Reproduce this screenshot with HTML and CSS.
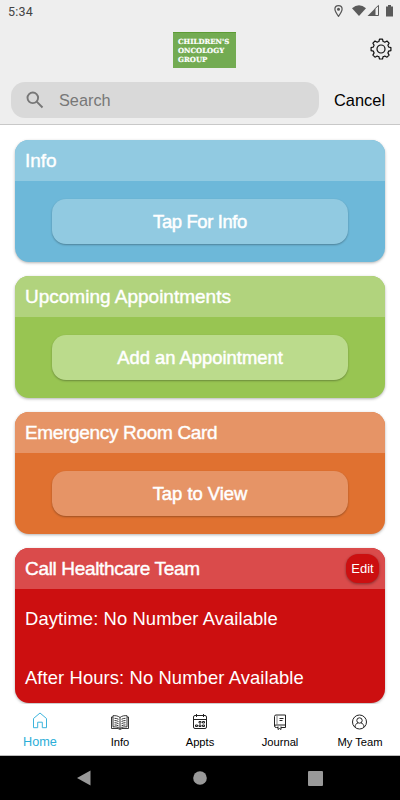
FILE: index.html
```html
<!DOCTYPE html>
<html lang="en">
<head>
    <meta charset="UTF-8">
    <meta name="viewport" content="width=device-width, initial-scale=1.0">
    <title>Children's Oncology Group</title>
    <link rel="stylesheet" href="styles.css">
</head>
<body>

    <header>
        <div class="status-bar">
            <span class="time">5:34</span>
            <svg width="64" height="16" viewBox="0 0 64 16">
                <path d="M6.500 4.600C4.400 4.600 2.900 6.200 2.900 8.100c0 2.500 3.600 7.200 3.600 7.200s3.600-4.700 3.600-7.200C10.100 6.200 8.600 4.600 6.500 4.600z" fill="none" stroke="#555" stroke-width="1.200"/>
                <circle cx="6.500" cy="8.300" r="1.500" fill="#555"/>
                <path d="M20 7.300Q27 1.300 34 7.300L27 15z" fill="#5a5a5a"/>
                <path d="M43 7.600v7.400h-7.500z" fill="#5a5a5a"/>
                <path d="M43 7.700l3.500-3.300v10.100H43z" fill="none" stroke="#5a5a5a"/>
                <path d="M54 5.500h2V4h3v1.500h2V15.500h-7z" fill="#5a5a5a"/>
            </svg>
        </div>
        <div class="title-bar">
            <div class="logo">CHILDREN'S<br>ONCOLOGY<br>GROUP</div>
            <svg class="gear" width="22" height="22" viewBox="0 0 22 22" fill="none" stroke="#111" stroke-width="1.200" stroke-linejoin="round">
                <path d="M9.500 1.200h3l.6 2.300q.9.200 1.700.7l2.200-1.200 2.100 2.100-1.200 2.200q.5.800.7 1.700l2.300.6v3l-2.300.6q-.2.900-.7 1.700l1.200 2.200-2.100 2.100-2.200-1.200q-.8.500-1.700.7l-.6 2.300h-3l-.6-2.300q-.9-.2-1.700-.7L5 19.200l-2.100-2.100 1.200-2.200q-.5-.8-.7-1.700l-2.300-.6v-3l2.300-.6q.2-.9.700-1.700L2.900 5.100 5 3l2.200 1.200q.8-.5 1.700-.7z"/>
                <circle cx="11" cy="11" r="4"/>
            </svg>
        </div>
        <div class="search-row">
            <div class="search">
                <svg width="18" height="18" viewBox="0 0 18 18" fill="none" stroke="#777" stroke-width="1.900">
                    <circle cx="6.800" cy="6.800" r="5.300"/>
                    <path d="M10.700 10.700l5.800 5.800"/>
                </svg>
                <span>Search</span>
            </div>
            <span class="cancel">Cancel</span>
        </div>
    </header>

    <main>
        <section class="card blue">
            <h2>Info</h2>
            <button>Tap For Info</button>
        </section>
        <section class="card green">
            <h2>Upcoming Appointments</h2>
            <button>Add an Appointment</button>
        </section>
        <section class="card orange">
            <h2>Emergency Room Card</h2>
            <button>Tap to View</button>
        </section>
        <section class="card red">
            <h2>Call Healthcare Team <span class="edit">Edit</span></h2>
            <p>Daytime: No Number Available</p>
            <p>After Hours: No Number Available</p>
        </section>
    </main>

    <nav>
        <a class="active">
            <svg width="20" height="20" viewBox="0 0 20 20" fill="none" stroke="#3db4dc">
                <path d="M3.500 7.500v9.200h4.200v-5.500h4.600v5.500h4.200V7.500L10 2z"/>
            </svg>
            <span>Home</span>
        </a>
        <a>
            <svg width="20" height="20" viewBox="0 0 20 20" fill="none" stroke="#222" stroke-width=".9">
                <path d="M10 5.500C8 3.800 5.500 3.500 3 3.700v11.200c3-.2 5 .2 7 1.600 2-1.400 4-1.800 7-1.600V3.700c-2.500-.2-5 .1-7 1.800zv11"/>
                <path d="M3 5H1.500v11.500H8l2 1 2-1h6.500V5H17"/>
                <path d="M4.500 6.300q2.200 0 4 1M4.500 8.500q2.200 0 4 1M4.500 10.700q2.200 0 4 1M4.500 12.900q2.200 0 4 1M15.500 6.300q-2.200 0-4 1M15.500 8.500q-2.200 0-4 1M15.500 10.700q-2.200 0-4 1M15.500 12.900q-2.200 0-4 1"/>
            </svg>
            <span>Info</span>
        </a>
        <a>
            <svg width="20" height="20" viewBox="0 0 20 20" fill="none" stroke="#222">
                <rect x="3.500" y="3.500" width="13" height="13" rx="1.500"/>
                <path d="M3.500 7.500h13M6.500 2v3M13.500 2v3"/>
                <path d="M9 9.500h2v1.500H9zM12.500 9.500h2v1.500h-2zM5.500 13h2v1.500h-2zM9 13h2v1.500H9zM12.500 13h2v1.500h-2z"/>
            </svg>
            <span>Appts</span>
        </a>
        <a>
            <svg width="20" height="20" viewBox="0 0 20 20" fill="none" stroke="#222">
                <path d="M8 15.500H6.500q-2 0-2-1.500V4.500q0-1.500 1.500-1.500h9.500v12.500h-4.500M4.500 14q0-1 1.500-1h9.500"/>
                <path d="M7 3v10" stroke="#888"/>
                <path d="M9.500 6.500h4M9.500 8.500h3M8 14.500v3l1.500-1 1.500 1v-3"/>
            </svg>
            <span>Journal</span>
        </a>
        <a>
            <svg width="20" height="20" viewBox="0 0 20 20" fill="none" stroke="#222">
                <circle cx="9.500" cy="10" r="7"/>
                <circle cx="9.500" cy="8.500" r="2.700"/>
                <path d="M5 15.200c0-2.300 1.200-3.800 3-4.300M14 15.200c0-2.300-1.200-3.800-3-4.300"/>
            </svg>
            <span>My Team</span>
        </a>
    </nav>

    <footer>
        <svg width="14" height="16" viewBox="0 0 14 16"><path d="M0 8L13.500.500v15z" fill="#999"/></svg>
        <svg width="14" height="14" viewBox="0 0 14 14"><circle cx="7" cy="7" r="6.800" fill="#999"/></svg>
        <svg width="15" height="15" viewBox="0 0 15 15"><rect width="15" height="15" rx="1" fill="#999"/></svg>
    </footer>

</body>
</html>
```
FILE: styles.css
```css
* {
    box-sizing: border-box;
}
body {
    margin: 0;
    width: 400px;
    height: 800px;
    overflow: hidden;
    display: flex;
    flex-direction: column;
    background: white;
    font-family: "Liberation Sans", Arial, sans-serif;
}
header {
    height: 125px;
    flex: none;
    background: #eee;
    border-bottom: 1px solid #c8c8c8;
}
.status-bar {
    display: flex;
    justify-content: space-between;
    height: 24px;
    padding: 1px 4px 0 8px;
}
.time {
    font: 12.5px/21px Roboto, sans-serif;
    letter-spacing: 0.2px;
    color: #444;
}
.title-bar {
    display: grid;
    grid-template-columns: 1fr 63px 1fr;
    align-items: center;
    height: 50px;
    padding: 2px 8px 0 17px;
}
.logo {
    grid-column: 2;
    height: 36px;
    padding: 4px 0 0 5px;
    background: #73ab52;
    border-top: 1px solid #5d9c35;
    color: white;
    font: bold 7px/9px "DejaVu Serif", serif;
    -webkit-text-stroke: 0.2px white;
    white-space: nowrap;
}
.gear {
    justify-self: end;
    margin-bottom: 2px;
}
.search-row {
    display: flex;
    align-items: center;
    padding: 8px 0 0 11px;
}
.search {
    display: flex;
    align-items: center;
    gap: 15px;
    width: 308px;
    height: 36px;
    padding-left: 15px;
    border-radius: 14px;
    background: #d9d9d9;
    color: #777;
    font-size: 16.300px;
}
.cancel {
    margin-left: 15px;
    font-size: 16.400px;
}
main {
    flex: 1;
    min-height: 0;
    overflow: hidden;
    padding: 15px 15px 0;
    display: flex;
    flex-direction: column;
    gap: 14px;
}
.card {
    flex: none;
    height: 122px;
    border-radius: 14px;
    overflow: hidden;
    color: white;
    text-align: center;
    box-shadow: 0 1px 3px rgba(0,0,0,0.3);
}
.card h2 {
    display: flex;
    align-items: center;
    justify-content: space-between;
    height: 41px;
    margin: 0 0 18px;
    padding: 0 6px 0 10px;
    font-size: 19px;
    font-weight: normal;
    -webkit-text-stroke: 0.4px white;
}
.card button {
    width: 296px;
    height: 45px;
    border: none;
    border-radius: 14px;
    color: white;
    font-family: inherit;
    font-size: 18.400px;
    -webkit-text-stroke: 0.5px white;
    box-shadow: 0 1px 2px rgba(0,0,0,0.3);
}
.blue {
    background: #6db8d9;
}
.blue h2, .blue button {
    background: #91cae1;
}
.blue button {
    letter-spacing: -0.35px;
}
.green {
    background: #98c552;
}
.green h2 {
    background: #b1d37d;
}
.green button {
    background: #bbdb8c;
}
.orange {
    background: #e07130;
}
.orange h2, .orange button {
    background: #e69466;
}
.orange h2, .red h2 {
    letter-spacing: -0.33px;
}
.card.red {
    height: 155px;
    background: #cc0f10;
    text-align: left;
}
.red h2 {
    margin-bottom: 0;
    background: #da4b4b;
}
.red p {
    margin: 0;
    padding-left: 10px;
    font-size: 18.400px;
    letter-spacing: 0.1px;
    line-height: 59px;
}
.edit {
    width: 33px;
    height: 29px;
    border-radius: 12px;
    background: #cc0f10;
    font-size: 13px;
    letter-spacing: 0;
    line-height: 29px;
    text-align: center;
    -webkit-text-stroke: 0;
    box-shadow: 0 1px 3px rgba(0,0,0,0.4);
}
nav {
    flex: none;
    display: flex;
    height: 52px;
    border-bottom: 1px solid #bbb;
}
nav a {
    flex: 1;
    display: flex;
    flex-direction: column;
    align-items: center;
    padding-top: 8px;
    font-size: 11.200px;
    line-height: 20px;
}
nav svg {
    flex: none;
}
nav .active {
    padding-top: 7px;
    color: #2baed8;
    font-size: 12.700px;
    line-height: 22px;
}
footer {
    flex: none;
    display: flex;
    align-items: center;
    justify-content: space-between;
    height: 44px;
    padding: 0 77px;
    background: black;
}
```
